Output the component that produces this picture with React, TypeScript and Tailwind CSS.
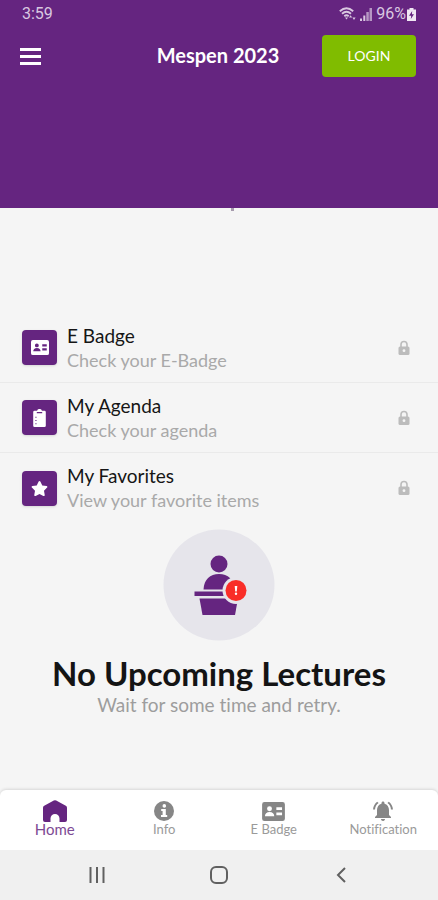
import { useState } from 'react'
import type { ReactNode } from 'react'
import { MdNotificationsActive } from 'react-icons/md'
import { FaStar } from 'react-icons/fa'

type TabId = 'home' | 'info' | 'badge' | 'notification'

function BadgeIcon({ className }: { className?: string }) {
  return (
    <svg viewBox="0 0 24 20" className={className} fill="currentColor" aria-hidden="true">
      <path
        fillRule="evenodd"
        d="M2.5 0h19A2.5 2.5 0 0 1 24 2.5v15a2.5 2.5 0 0 1-2.5 2.5h-19A2.5 2.5 0 0 1 0 17.5v-15A2.5 2.5 0 0 1 2.5 0ZM7.8 4.6a2.6 2.6 0 1 0 0 5.2 2.6 2.6 0 0 0 0-5.2ZM3 15h9.8c0-2.6-1.8-4.4-4.9-4.4S3 12.4 3 15ZM15 5.5h6v3h-6Zm0 5.5h6v3h-6Z"
      />
    </svg>
  )
}

function AgendaIcon({ className }: { className?: string }) {
  return (
    <svg viewBox="0 0 14 20" className={className} fill="currentColor" aria-hidden="true">
      <path
        fillRule="evenodd"
        d="M1.5 2H4.3a2.8 2.8 0 0 1 5.4 0h2.8A1.5 1.5 0 0 1 14 3.5v15a1.5 1.5 0 0 1-1.5 1.5h-11A1.5 1.5 0 0 1 0 18.5v-15A1.5 1.5 0 0 1 1.5 2ZM4 3.4v1.2h6V3.4ZM2.4 8.5v1.3h1.3V8.5Zm0 3.6v1.3h1.3v-1.3Zm0 3.6V17h1.3v-1.3Z"
      />
    </svg>
  )
}

function LockIcon() {
  return (
    <svg viewBox="0 0 12 16" className="h-4 w-3 text-[#bcbcbc]" aria-hidden="true">
      <path d="M3 7V4.5a3 3 0 0 1 6 0V7" fill="none" stroke="currentColor" strokeWidth="1.6" />
      <rect x="0.5" y="6.5" width="11" height="8.5" rx="1.5" fill="currentColor" />
      <circle cx="6" cy="10.7" r="1.4" fill="#f5f5f5" />
    </svg>
  )
}

function HomeIcon() {
  return (
    <svg viewBox="0 0 24 22" className="h-[22px] w-6" fill="currentColor" aria-hidden="true">
      <path d="M10.800.5a2.4 2.4 0 0 1 2.4 0l9.6 5.3A2.4 2.4 0 0 1 24 7.9V20a2 2 0 0 1-2 2h-5.500v-3.600a4.500 4.500 0 0 0-9 0V22H2a2 2 0 0 1-2-2V7.9a2.4 2.4 0 0 1 1.200-2.100Z" />
    </svg>
  )
}

function InfoIcon() {
  return (
    <svg viewBox="0 0 20 20" className="size-5" aria-hidden="true">
      <circle cx="10" cy="10" r="10" fill="currentColor" />
      <circle cx="10.3" cy="4.9" r="1.8" fill="#fff" />
      <path d="M7.2 8h4.600v6.100h1.400V16H7v-1.900h1.600V9.900H7.200Z" fill="#fff" />
    </svg>
  )
}

function LectureIcon() {
  return (
    <svg viewBox="0 0 112 112" className="size-28" aria-hidden="true">
      <circle cx="56" cy="56" r="55.5" fill="#e6e5eb" />
      <g fill="#652580">
        <circle cx="56" cy="35" r="8.5" />
        <path d="M40.500 60.500C41 50.500 47 45 56 45s15 5.500 15.500 15.500Z" />
        <path d="M31.500 62.500h48v4.500h-48Z" />
        <path d="M36.500 69.500h38.500l-3 16.500H39.500Z" />
      </g>
      <circle cx="73" cy="61.5" r="13.5" fill="#e6e5eb" />
      <circle cx="73" cy="61.5" r="10.5" fill="#f92d28" />
      <path d="M71.700 57h2.600l-.5 5.500h-1.600Z" fill="#fff" />
      <circle cx="73" cy="64.800" r="1.200" fill="#fff" />
    </svg>
  )
}

function StatusBar() {
  return (
    <div className="flex h-7 items-center justify-between pr-[22px] pl-[22px] font-[Roboto,sans-serif] text-base text-[#d9c8e0]">
      <span>3:59</span>
      <div className="flex items-center gap-1">
        <svg viewBox="0 0 17 14" className="h-3.5 w-[17px]" fill="none" stroke="currentColor" aria-hidden="true">
          <path d="M.8 4.200Q7.500-1.500 14.200 4.200M3 6.800q4.500-3.900 9 0M5.300 9.300q2.200-1.900 4.400 0" strokeWidth="1.9" />
          <path d="M6 10.500h3L7.500 12.500Z" fill="currentColor" stroke="none" />
          <path d="m10 10.500 1.600-2.300 1.600 2.300Zm3.400 0h3.200L15 13Z" fill="currentColor" stroke="none" />
        </svg>
        <svg viewBox="0 0 12 13" className="h-[13px] w-3" fill="currentColor" aria-hidden="true">
          <path d="M0 10.500h2V13H0Zm3.300-3h2V13h-2Z" />
          <path d="M6.300 4h2.500v9H6.300ZM9.500 0H12v13H9.500Z" opacity=".7" />
        </svg>
        <div className="flex items-center gap-px">
          <span>96%</span>
          <svg viewBox="0 0 9 13" className="h-[13px] w-[9px]" aria-hidden="true">
            <path d="M2.500 0h4v1.500H9V13H0V1.500h2.500Z" fill="#f0e8f3" />
            <path d="M5.200 3 2 7.800h2.200L3.800 11 7 6.200H4.900Z" fill="#652580" />
          </svg>
        </div>
      </div>
    </div>
  )
}

const menuItems: { title: string; text: string; icon: ReactNode }[] = [
  { title: 'E Badge', text: 'Check your E-Badge', icon: <BadgeIcon className="h-[15px] w-[18px]" /> },
  { title: 'My Agenda', text: 'Check your agenda', icon: <AgendaIcon className="h-[18px] w-[13px]" /> },
  { title: 'My Favorites', text: 'View your favorite items', icon: <FaStar className="size-[17px]" /> },
]

const tabs: { id: TabId; label: string; icon: ReactNode }[] = [
  { id: 'home', label: 'Home', icon: <HomeIcon /> },
  { id: 'info', label: 'Info', icon: <InfoIcon /> },
  { id: 'badge', label: 'E Badge', icon: <BadgeIcon className="h-[19px] w-[23px]" /> },
  { id: 'notification', label: 'Notification', icon: <MdNotificationsActive className="size-6" /> },
]

export default function App() {
  const [activeTab, setActiveTab] = useState<TabId>('home')

  return (
    <div className="flex min-h-screen flex-col bg-[#f5f5f5] font-[Lato,sans-serif] [font-variant-ligatures:none]">
      <header className="bg-[#652580] pb-31">
        <StatusBar />
        <div className="grid h-14 grid-cols-[1fr_auto_1fr] items-center pr-[22px] pl-5">
          <button type="button" aria-label="Menu" className="flex w-[21px] flex-col gap-1">
            <span className="h-[3px] bg-white" />
            <span className="h-[3px] bg-white" />
            <span className="h-[3px] bg-white" />
          </button>
          <h1 className="pb-0.5 text-xl font-bold text-white">Mespen 2023</h1>
          <button
            type="button"
            className="h-[42px] w-[94px] justify-self-end rounded bg-[#80bc00] text-sm text-white"
          >
            LOGIN
          </button>
        </div>
      </header>

      <main className="flex flex-1 flex-col">
        <div className="flex h-[105px] justify-center pl-[26px]">
          <span className="h-[3px] w-[3px] bg-[#a69bad]" />
        </div>

        <ul>
          {menuItems.map(item => (
            <li key={item.title} className="h-[70px] border-b border-[#eaeaea] last:border-b-0">
              <button type="button" className="flex h-full w-full items-center pr-7 pl-[22px] text-left">
                <span className="flex size-[35px] items-center justify-center rounded bg-[#652580] text-white shadow-sm">
                  {item.icon}
                </span>
                <span className="ml-[10px] flex-1">
                  <span className="block text-[19px] leading-[25px] text-[#161616]">{item.title}</span>
                  <span className="block text-lg leading-[25px] text-[#a9a9a9]">{item.text}</span>
                </span>
                <LockIcon />
              </button>
            </li>
          ))}
        </ul>

        <section className="flex flex-col items-center pt-1.5 text-center">
          <LectureIcon />
          <h2 className="mt-3 text-[33px] leading-10 font-bold text-[#141414]">No Upcoming Lectures</h2>
          <p className="text-[19px] leading-6 text-[#9d9d9d]">Wait for some time and retry.</p>
        </section>
      </main>

      <nav className="grid h-[60px] grid-cols-4 rounded-t-md bg-white shadow-[0_-1px_3px_rgba(0,0,0,0.12)]">
        {tabs.map(tab => (
          <button
            key={tab.id}
            type="button"
            onClick={() => setActiveTab(tab.id)}
            className={`flex flex-col items-center pt-[9px] ${activeTab === tab.id ? 'text-[#652580]' : 'text-[#868686]'}`}
          >
            <span className="flex h-6 items-center">{tab.icon}</span>
            <span
              className={
                activeTab === tab.id
                  ? 'text-[15px] leading-3 text-[#7d4a94]'
                  : 'text-[13px] leading-3 text-[#9a9a9a]'
              }
            >
              {tab.label}
            </span>
          </button>
        ))}
      </nav>

      <div className="grid h-[50px] grid-cols-3 items-center justify-items-center bg-[#f0f0f0] px-9 text-[#606060]">
        <button type="button" aria-label="Recent apps">
          <svg viewBox="0 0 16 16" className="size-4" stroke="currentColor" strokeWidth="2">
            <path d="M1.500 0v16M8 0v16M14.500 0v16" />
          </svg>
        </button>
        <button type="button" aria-label="Home screen">
          <svg viewBox="0 0 18 18" className="size-[18px]" fill="none" stroke="currentColor" strokeWidth="2">
            <rect x="1" y="1" width="16" height="16" rx="5" />
          </svg>
        </button>
        <button type="button" aria-label="Back">
          <svg viewBox="0 0 10 16" className="h-4 w-[10px]" fill="none" stroke="currentColor" strokeWidth="2">
            <path d="M9 1 2 8l7 7" />
          </svg>
        </button>
      </div>
    </div>
  )
}
